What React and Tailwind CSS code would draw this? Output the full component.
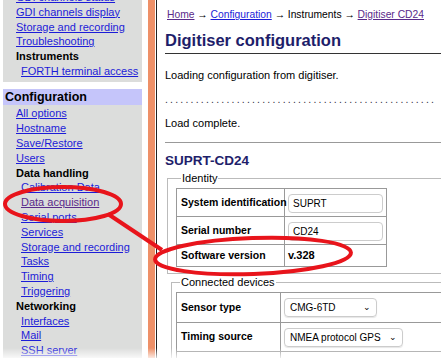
import React from "react";

const L1 = "block pl-[13px] text-[#1c1cd8] underline";
const L2 = "block pl-[18px] text-[#1c1cd8] underline";
const H = "block pl-[13px] text-black font-bold";

function Side({ items }) {
  return items.map(([t, c], i) => (
    <div key={i} className={c}>
      {t}
    </div>
  ));
}

const cell = "border border-[#999] px-[4px] font-bold whitespace-nowrap text-[10.5px]";

export default function App() {
  return (
    <div
      className="relative w-[441px] h-[358px] overflow-hidden bg-white flex"
      style={{ fontFamily: '"Liberation Sans", Arial, sans-serif' }}
    >
      {/* sidebar */}
      <div className="w-[139px] ml-[3px] shrink-0 flex flex-col text-[11px] leading-[14.8px]">
        <div className="bg-[#dcdddc] -mt-[10px] pb-[3px]">
          <Side
            items={[
              ["GDI channels status", L1],
              ["GDI channels display", L1],
              ["Storage and recording", L1],
              ["Troubleshooting", L1],
              ["Instruments", H],
              ["FORTH terminal access", L2],
            ]}
          />
        </div>
        <div className="h-[11px] bg-white" />
        <div className="bg-[#c5c5fa] h-[16px] pl-[2px] text-[12.5px] font-bold leading-[16px] text-black">
          Configuration
        </div>
        <div className="bg-[#dcdddc] flex-1 pt-[1px]">
          <Side
            items={[
              ["All options", L1],
              ["Hostname", L1],
              ["Save/Restore", L1],
              ["Users", L1],
              ["Data handling", H],
              ["Calibration Data", L2],
              ["Data acquisition", L2.replace("text-[#1c1cd8]", "text-[#5a2a8a]")],
              ["Serial ports", L2],
              ["Services", L2],
              ["Storage and recording", L2],
              ["Tasks", L2],
              ["Timing", L2],
              ["Triggering", L2],
              ["Networking", H],
              ["Interfaces", L2],
              ["Mail", L2],
              ["SSH server", L2],
            ]}
          />
        </div>
      </div>
      <div className="w-[6px] shrink-0" />
      <div className="w-[7px] shrink-0 bg-[#ee9068]" />
      <div className="w-[1px] shrink-0" />
      <div className="w-[1px] shrink-0 bg-[#222]" />
      {/* main */}
      <div className="shrink-0 w-[330px] pl-[8px] text-[11px] text-black">
        <div className="mt-[8px] leading-[14px] pl-[2px] text-[10.3px] whitespace-nowrap">
          <span className="text-[#5a2a8a] underline">Home</span> →{" "}
          <span className="text-[#1c1cd8] underline">Configuration</span> → Instruments →{" "}
          <span className="text-[#5a2a8a] underline">Digitiser CD24</span>
        </div>
        <div className="mt-[7px] h-[22px] leading-[22px] text-[16.5px] font-bold text-[#1e1e6a]">
          Digitiser configuration
        </div>
        <div className="mt-[2px] h-[1px] bg-[#333]" />
        <div className="mt-[14px] leading-[14px]">Loading configuration from digitiser.</div>
        <div className="mt-[10px] leading-[14px] whitespace-nowrap tracking-[2.2px] text-[10.5px] text-[#334]">
          {".".repeat(53)}
        </div>
        <div className="mt-[10px] leading-[14px]">Load complete.</div>
        <div className="mt-[12px] h-[1px] bg-[#999]" />
        <div className="mt-[10px] leading-[16px] text-[13.5px] font-bold text-[#1e1e6a]">SUPRT-CD24</div>
        <fieldset className="mt-[2px] ml-[2px] border border-[#bbb] pl-[8px] pb-[6px] pt-[3px]">
          <legend className="ml-[5px] px-[1px] leading-[14px]">Identity</legend>
          <table className="border-collapse table-fixed w-[211px]">
            <tbody>
              <tr className="h-[28px]">
                <td className={cell + " w-[108px]"}>System identification</td>
                <td className="border border-[#999] px-[3px]">
                  <div className="h-[19px] w-[95px] border border-[#ccc] rounded-[4px] px-[4px] leading-[17px] text-[10px] mt-[2px]">
                    SUPRT
                  </div>
                </td>
              </tr>
              <tr className="h-[28px]">
                <td className={cell}>Serial number</td>
                <td className="border border-[#999] px-[3px]">
                  <div className="h-[19px] w-[95px] border border-[#ccc] rounded-[4px] px-[4px] leading-[17px] text-[10px] mt-[2px]">
                    CD24
                  </div>
                </td>
              </tr>
              <tr className="h-[22px]">
                <td className={cell}>Software version</td>
                <td className="border border-[#999] px-[3px] font-bold text-[11px]">v.328</td>
              </tr>
            </tbody>
          </table>
        </fieldset>
        <fieldset className="mt-[1px] ml-[6px] border border-[#bbb] pl-[4px] pt-[3px]">
          <legend className="ml-[4px] px-[1px] leading-[14px]">Connected devices</legend>
          <table className="border-collapse table-fixed w-[300px]">
            <tbody>
              <tr className="h-[30px]">
                <td className={cell + " w-[104px]"}>Sensor type</td>
                <td className="border border-[#999] px-[3px]">
                  <div className="h-[19px] w-[93px] border border-[#ccc] rounded-[4px] px-[5px] leading-[17px] text-[10px] flex justify-between items-center shadow-[0_1px_1px_rgba(0,0,0,0.1)]">
                    <span>CMG-6TD</span>
                    <span className="text-[9px]">⌄</span>
                  </div>
                </td>
              </tr>
              <tr className="h-[29px]">
                <td className={cell}>Timing source</td>
                <td className="border border-[#999] px-[3px]">
                  <div className="h-[19px] w-[119px] border border-[#ccc] rounded-[4px] px-[5px] leading-[17px] text-[10px] flex justify-between items-center shadow-[0_1px_1px_rgba(0,0,0,0.1)]">
                    <span>NMEA protocol GPS</span>
                    <span className="text-[9px]">⌄</span>
                  </div>
                </td>
              </tr>
              <tr className="h-[20px]">
                <td className="border border-[#999]"></td>
                <td className="border border-[#999]"></td>
              </tr>
            </tbody>
          </table>
        </fieldset>
      </div>
      {/* annotation overlay */}
      <svg className="absolute inset-0 pointer-events-none" width="441" height="358">
        <ellipse cx="63" cy="204" rx="58" ry="17" fill="none" stroke="#e8141b" strokeWidth="4" />
        <line x1="108" y1="214" x2="162" y2="250" stroke="#e8141b" strokeWidth="4" />
        <ellipse cx="253" cy="256" rx="98" ry="18" fill="none" stroke="#e8141b" strokeWidth="4" transform="rotate(-2 253 256)" />
      </svg>
      <div className="absolute left-0 right-0 bottom-0 h-[10px] bg-gradient-to-b from-transparent to-white/80" />
    </div>
  );
}
